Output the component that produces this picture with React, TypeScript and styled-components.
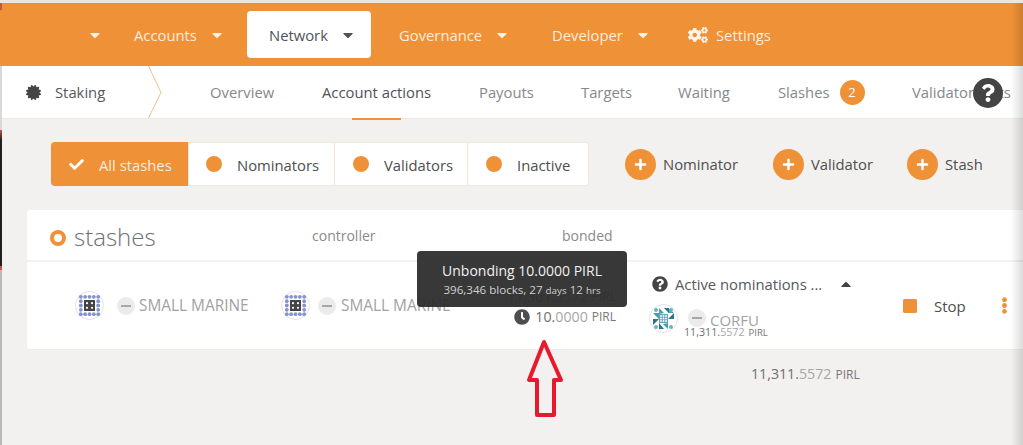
import * as React from 'react';
import styled, { createGlobalStyle } from 'styled-components';
import { FaCaretDown, FaCaretUp, FaCertificate, FaCheck, FaClock, FaCogs, FaEllipsisV, FaPlus, FaQuestion, FaQuestionCircle, FaStop } from 'react-icons/fa';

const ORANGE = '#ef9237';
const INK = '#4e4e4e';
const MUTED = '#8a8a8a';

const GlobalStyle = createGlobalStyle`
  html, body {
    margin: 0;
    height: 100%;
    overflow: hidden;
    background: #f3f1ef;
    font-family: 'Open Sans', 'Noto Sans', sans-serif;
    font-size: 14.8px;
    color: ${INK};
  }
`;

const Page = styled.div`
  position: relative;
  width: 1023px;
  height: 445px;
  overflow: hidden;
  border-top: 3px solid #efe4d8;
  box-sizing: border-box;
  background: #f3f1ef;
`;

const TopNav = styled.nav`
  height: 63px;
  background: ${ORANGE};
  display: flex;
  align-items: center;
  padding: 0 0 0 87px;
  box-sizing: border-box;
  color: #fff;
`;

const NavCaret = styled.span`
  display: inline-flex;
  font-size: 16px;
  margin-left: 12px;
`;

const NavItem = styled.a<{ $width: number; $pad?: number; $active?: boolean }>`
  width: ${({ $width }) => $width}px;
  height: 47px;
  display: flex;
  align-items: center;
  padding-left: ${({ $pad }) => $pad ?? 0}px;
  box-sizing: border-box;
  border-radius: 4px;
  flex: none;
  background: ${({ $active }) => ($active ? '#fff' : 'transparent')};
  color: ${({ $active }) => ($active ? '#4f5258' : 'rgba(255, 255, 255, 0.85)')};
`;

const BareCaret = styled.span`
  display: inline-flex;
  font-size: 16px;
`;

const SettingsGlyph = styled.span`
  display: inline-flex;
  font-size: 20px;
  margin-right: 8px;
  color: rgba(255, 255, 255, 0.9);
`;

const SubNav = styled.div`
  height: 52px;
  background: #fff;
  display: flex;
  align-items: center;
  border-bottom: 1px solid #ece9e6;
  white-space: nowrap;
`;

const SectionTitle = styled.div`
  width: 148px;
  padding-left: 26px;
  box-sizing: border-box;
  display: flex;
  align-items: center;
  gap: 14px;
  color: #55585c;
  flex: none;
`;

const Chevron = styled.svg`
  width: 14px;
  height: 52px;
  flex: none;
  margin-right: 48px;
`;

const TabItem = styled.a<{ $active?: boolean; $width: number }>`
  position: relative;
  width: ${({ $width }) => $width}px;
  flex: none;
  height: 52px;
  display: flex;
  align-items: center;
  color: ${({ $active }) => ($active ? '#4f5258' : '#85888c')};

  ${({ $active }) =>
    $active &&
    `&:after {
      content: '';
      position: absolute;
      left: 30px;
      width: 49px;
      bottom: -2px;
      height: 2px;
      background: ${ORANGE};
    }`}
`;

const Badge = styled.span`
  width: 25px;
  height: 25px;
  margin-left: 10px;
  border-radius: 50%;
  background: ${ORANGE};
  color: #fff;
  font-size: 13px;
  display: flex;
  align-items: center;
  justify-content: center;
`;

const Toolbar = styled.div`
  height: 44px;
  margin: 23px 0 24px 51px;
  display: flex;
  align-items: center;
`;

const FilterGroup = styled.div`
  display: flex;
  height: 44px;
  width: 538px;
  flex: none;
  background: #fff;
  border-radius: 4px;
  box-shadow: inset 0 0 0 1px #f3e6d9;
  margin-right: 36px;
`;

const FilterButton = styled.button<{ $width: number; $active?: boolean; $pad: number }>`
  width: ${({ $width }) => $width}px;
  flex: none;
  display: flex;
  align-items: center;
  gap: ${({ $active }) => ($active ? 15 : 15)}px;
  padding: 1px 0 0 ${({ $pad }) => $pad}px;
  box-sizing: border-box;
  border: 0;
  border-right: 1px solid #f3e6d9;
  border-radius: ${({ $active }) => ($active ? '4px 0 0 4px' : '0')};
  background: ${({ $active }) => ($active ? ORANGE : 'transparent')};
  color: ${({ $active }) => ($active ? 'rgba(255, 255, 255, 0.85)' : INK)};
  font: inherit;

  &:last-child {
    border-right: 0;
  }
`;

const FilterDot = styled.span`
  width: 16px;
  height: 16px;
  border-radius: 50%;
  background: ${ORANGE};
  flex: none;
  margin-top: -1px;
`;

const AddButton = styled.button<{ $width: number }>`
  width: ${({ $width }) => $width}px;
  flex: none;
  display: flex;
  align-items: center;
  gap: 7px;
  padding: 0;
  border: 0;
  background: transparent;
  color: ${INK};
  font: inherit;
`;

const AddCircle = styled.span`
  width: 31px;
  height: 31px;
  border-radius: 50%;
  background: ${ORANGE};
  color: #fff;
  font-size: 13px;
  display: flex;
  align-items: center;
  justify-content: center;
  flex: none;
`;

const Table = styled.section`
  margin-left: 27px;
`;

const HeaderRow = styled.div`
  height: 50px;
  background: #fff;
  border-radius: 4px 0 0 0;
  display: grid;
  grid-template-columns: 285px 250px 1fr;
  align-items: center;
  box-sizing: border-box;
  color: ${MUTED};
  font-size: 14px;
`;

const Heading = styled.h1`
  margin: 2px 0 0 23px;
  display: flex;
  align-items: center;
  gap: 8px;
  font-size: 24px;
  font-weight: 300;
  color: #6d7175;
`;

const HeadingDot = styled.span`
  width: 8px;
  height: 8px;
  border-radius: 50%;
  background: #fff;
  border: 4px solid ${ORANGE};
  flex: none;
  margin-top: 3px;
`;

const StashRow = styled.div`
  height: 87px;
  margin-top: 2px;
  background: #fff;
  border-radius: 0 0 0 4px;
  border-bottom: 1px solid #ecebe9;
  display: grid;
  grid-template-columns: 252px 234px 103px 286px 90px 1fr;
  align-items: center;
`;

const AddressCell = styled.div<{ $pad: number }>`
  display: flex;
  align-items: center;
  padding-left: ${({ $pad }) => $pad}px;
  color: #a2a2a2;
  font-size: 15.4px;
  white-space: nowrap;
`;

const Identicon = styled.svg<{ $gap: number }>`
  width: 29px;
  height: 29px;
  flex: none;
  margin-right: ${({ $gap }) => $gap}px;
`;

const MinusChip = styled.span<{ $gap: number }>`
  width: 18px;
  height: 18px;
  border-radius: 50%;
  background: #ebebeb;
  flex: none;
  margin-right: ${({ $gap }) => $gap}px;
  display: flex;
  align-items: center;
  justify-content: center;

  &:before {
    content: '';
    width: 10px;
    height: 2px;
    background: #a8a8a8;
  }
`;

const BondedCell = styled.div`
  display: flex;
  flex-direction: column;
  align-items: flex-end;
  font-size: 14.2px;
  color: ${MUTED};
  padding-top: 2px;
`;

const BalanceLine = styled.div`
  display: flex;
  align-items: center;
  white-space: nowrap;
  height: 20px;
`;

const ClockGlyph = styled.span`
  display: inline-flex;
  font-size: 16px;
  color: ${INK};
  margin-right: 5px;
`;

const Whole = styled.span`
  color: #6f6f6f;
`;

const Fraction = styled.span`
  color: #a6a6a6;
`;

const Unit = styled.span<{ $size: number }>`
  font-size: ${({ $size }) => $size}px;
  margin-left: 4px;
  color: #777;
`;

const NominationCell = styled.div`
  padding-left: 33px;
  display: flex;
  flex-direction: column;
  margin-top: -3px;
`;

const NominationHead = styled.div`
  display: flex;
  align-items: center;
  height: 22px;
  padding-left: 3px;
  white-space: nowrap;
  color: #55585c;
`;

const HelpGlyph = styled.span`
  display: inline-flex;
  font-size: 16px;
  margin-right: 7px;
  color: #444;
`;

const CaretUp = styled.span`
  display: inline-flex;
  font-size: 16px;
  margin-left: 16px;
  color: #444;
`;

const Nominee = styled.div`
  position: relative;
  display: flex;
  align-items: center;
  height: 34px;
  margin-top: 6px;
  color: #a2a2a2;
  font-size: 15px;
`;

const NomineeName = styled.span`
  padding-top: 4px;
`;

const NomineeAmount = styled.div`
  position: absolute;
  left: 35px;
  top: 24px;
  font-size: 10.7px;
  white-space: nowrap;
`;

const StopButton = styled.div`
  display: flex;
  align-items: center;
  gap: 16px;
  color: ${INK};
  font-size: 15px;
`;

const StopGlyph = styled.span`
  display: inline-flex;
  font-size: 16px;
  color: ${ORANGE};
`;

const MoreCell = styled.div`
  display: flex;
  font-size: 17px;
  color: ${ORANGE};
  padding-left: 4px;
`;

const Total = styled.div`
  margin: 14px 0 0 724px;
  font-size: 14.2px;
  white-space: nowrap;
`;

const Tooltip = styled.div`
  position: absolute;
  left: 417px;
  top: 248px;
  width: 210px;
  height: 56px;
  border-radius: 4px;
  background: rgba(45, 45, 45, 0.95);
  color: #f1f1f1;
  text-align: center;
  padding-top: 10px;
  box-sizing: border-box;
  font-size: 14px;
  line-height: 20px;
`;

const TooltipDetail = styled.div`
  font-size: 11.6px;
  line-height: 14px;
  margin-top: 2px;
  color: #d0d0d0;
`;

const TinyUnit = styled.span`
  font-size: 9.8px;
`;

const HelpButton = styled.div`
  position: absolute;
  left: 973px;
  top: 75px;
  width: 30px;
  height: 30px;
  border-radius: 50%;
  background: #444;
  color: #fff;
  font-size: 18px;
  display: flex;
  align-items: center;
  justify-content: center;
`;

const Annotation = styled.svg`
  position: absolute;
  left: 524px;
  top: 335px;
  width: 42px;
  height: 82px;
`;

const EdgeLine = styled.div`
  position: absolute;
  left: 0;
  top: -3px;
  width: 2px;
  height: 445px;
  background: linear-gradient(
    to bottom,
    #c8553d 0,
    #c8553d 10px,
    transparent 10px,
    transparent 66px,
    #d8d8d8 66px,
    #d8d8d8 130px,
    #c8553d 130px,
    #1f1f1f 140px,
    #1f1f1f 266px,
    #c8553d 266px,
    #c8553d 270px,
    #b9b9b9 270px
  );
`;

const WindowShade = styled.div`
  position: absolute;
  right: 0;
  top: 0;
  width: 12px;
  height: 100%;
  background: linear-gradient(to right, rgba(0, 0, 0, 0), rgba(0, 0, 0, 0.14));
  pointer-events: none;
`;

const MarineIcon = ({ gap }: { gap: number }) => {
  const outer = [0, 1, 2, 3, 4].flatMap(row =>
    [0, 1, 2, 3, 4]
      .filter(col => (row > 0 && row < 4 ? col === 0 || col === 4 : true))
      .map(col => ({ x: 5.8 + col * 4.35, y: 5.8 + row * 4.35 }))
  );
  return (
    <Identicon $gap={gap} viewBox="0 0 29 29">
      <circle cx="14.5" cy="14.5" r="14" fill="#fff" stroke="#e2e2e2" />
      {outer.map(dot => (
        <circle key={`${dot.x}-${dot.y}`} cx={dot.x} cy={dot.y} r="1.9" fill="#8592d0" />
      ))}
      <rect x="9" y="9" width="11" height="11" fill="#444" />
      <circle cx="12" cy="12.2" r="1.1" fill="#fff" />
      <circle cx="17" cy="12.2" r="1.1" fill="#fff" />
      <circle cx="12" cy="16.8" r="1.1" fill="#fff" />
      <circle cx="17" cy="16.8" r="1.1" fill="#fff" />
    </Identicon>
  );
};

const CorfuIcon = ({ gap }: { gap: number }) => (
  <Identicon $gap={gap} viewBox="0 0 29 29">
    <circle cx="14.5" cy="14.5" r="14" fill="#fff" stroke="#e2e2e2" />
    <path d="M4 9l6 0 0 6zM25 9l-6 0 0-5zM10 4l5 5-5 1zM19 25l-5-5 5-1z" fill="#4d9bab" />
    <path d="M4 15l6 0-6 6zM25 15l-6 0 6-6zM10 25l0-6 5 6zM20 4l0 5-5-5z" fill="#2f7486" />
    <circle cx="7" cy="6" r="2" fill="#62b5c6" />
    <circle cx="22" cy="23" r="2" fill="#62b5c6" />
    <circle cx="7" cy="23" r="2" fill="#62b5c6" />
    <circle cx="22" cy="6" r="2" fill="#62b5c6" />
    <rect x="10" y="10" width="9" height="9" fill="#5aaabb" />
    {[12, 14.5, 17].flatMap(x =>
      [12, 14.5, 17].map(y => <circle key={`${x}-${y}`} cx={x} cy={y} r="0.9" fill="#fff" />)
    )}
  </Identicon>
);

const Balance = ({ whole, fraction, size = 12 }: { whole: string; fraction: string; size?: number }) => (
  <>
    <Whole>{whole}.</Whole>
    <Fraction>{fraction}</Fraction>
    <Unit $size={size}>PIRL</Unit>
  </>
);

export default function App() {
  return (
    <Page>
      <GlobalStyle />
      <TopNav>
        <NavItem $width={47}>
          <BareCaret>
            <FaCaretDown />
          </BareCaret>
        </NavItem>
        <NavItem $width={113}>
          Accounts
          <NavCaret>
            <FaCaretDown />
          </NavCaret>
        </NavItem>
        <NavItem $width={124} $pad={22} $active>
          Network
          <NavCaret>
            <FaCaretDown />
          </NavCaret>
        </NavItem>
        <NavItem $width={153} $pad={28}>
          Governance
          <NavCaret>
            <FaCaretDown />
          </NavCaret>
        </NavItem>
        <NavItem $width={164} $pad={28}>
          Developer
          <NavCaret>
            <FaCaretDown />
          </NavCaret>
        </NavItem>
        <NavItem $width={108}>
          <SettingsGlyph>
            <FaCogs />
          </SettingsGlyph>
          Settings
        </NavItem>
      </TopNav>
      <SubNav>
        <SectionTitle>
          <FaCertificate size={15} color="#444" />
          Staking
        </SectionTitle>
        <Chevron viewBox="0 0 14 52">
          <path d="M0.5 0L13 26.5 0.5 52" fill="none" stroke="#f2bd8b" strokeWidth="1" />
        </Chevron>
        <TabItem $width={112}>Overview</TabItem>
        <TabItem $width={157} $active>
          Account actions
        </TabItem>
        <TabItem $width={102}>Payouts</TabItem>
        <TabItem $width={97}>Targets</TabItem>
        <TabItem $width={100}>Waiting</TabItem>
        <TabItem $width={134}>
          Slashes
          <Badge>2</Badge>
        </TabItem>
        <TabItem $width={110}>Validator stats</TabItem>
      </SubNav>
      <Toolbar>
        <FilterGroup>
          <FilterButton $width={138} $active $pad={18}>
            <FaCheck size={15} color="#fff" />
            All stashes
          </FilterButton>
          <FilterButton $width={146} $pad={17}>
            <FilterDot />
            Nominators
          </FilterButton>
          <FilterButton $width={133} $pad={18}>
            <FilterDot />
            Validators
          </FilterButton>
          <FilterButton $width={121} $pad={18}>
            <FilterDot />
            Inactive
          </FilterButton>
        </FilterGroup>
        <AddButton $width={148}>
          <AddCircle>
            <FaPlus />
          </AddCircle>
          Nominator
        </AddButton>
        <AddButton $width={134}>
          <AddCircle>
            <FaPlus />
          </AddCircle>
          Validator
        </AddButton>
        <AddButton $width={80}>
          <AddCircle>
            <FaPlus />
          </AddCircle>
          Stash
        </AddButton>
      </Toolbar>
      <Table>
        <HeaderRow>
          <Heading>
            <HeadingDot />
            stashes
          </Heading>
          <span>controller</span>
          <span>bonded</span>
        </HeaderRow>
        <StashRow>
          <AddressCell $pad={48}>
            <MarineIcon gap={13} />
            <MinusChip $gap={4} />
            SMALL MARINE
          </AddressCell>
          <AddressCell $pad={2}>
            <MarineIcon gap={8} />
            <MinusChip $gap={5} />
            SMALL MARINE
          </AddressCell>
          <BondedCell>
            <BalanceLine>
              <Balance whole="11,301" fraction="5572" />
            </BalanceLine>
            <BalanceLine>
              <ClockGlyph>
                <FaClock />
              </ClockGlyph>
              <Balance whole="10" fraction="0000" />
            </BalanceLine>
          </BondedCell>
          <NominationCell>
            <NominationHead>
              <HelpGlyph>
                <FaQuestionCircle />
              </HelpGlyph>
              Active nominations ...
              <CaretUp>
                <FaCaretUp />
              </CaretUp>
            </NominationHead>
            <Nominee>
              <CorfuIcon gap={10} />
              <MinusChip $gap={4} />
              <NomineeName>CORFU</NomineeName>
              <NomineeAmount>
                <Balance whole="11,311" fraction="5572" size={9.5} />
              </NomineeAmount>
            </Nominee>
          </NominationCell>
          <StopButton>
            <StopGlyph>
              <FaStop />
            </StopGlyph>
            Stop
          </StopButton>
          <MoreCell>
            <FaEllipsisV />
          </MoreCell>
        </StashRow>
        <Total>
          <Balance whole="11,311" fraction="5572" />
        </Total>
      </Table>
      <Tooltip>
        Unbonding 10.0000 PIRL
        <TooltipDetail>
          396,346 blocks, 27 <TinyUnit>days</TinyUnit> 12 <TinyUnit>hrs</TinyUnit>
        </TooltipDetail>
      </Tooltip>
      <HelpButton>
        <FaQuestion />
      </HelpButton>
      <Annotation viewBox="0 0 42 82">
        <path d="M20 4L5 42h8v35h17V42h7z" fill="none" stroke="#e8192c" strokeWidth="4" strokeLinejoin="round" />
      </Annotation>
      <EdgeLine />
      <WindowShade />
    </Page>
  );
}
